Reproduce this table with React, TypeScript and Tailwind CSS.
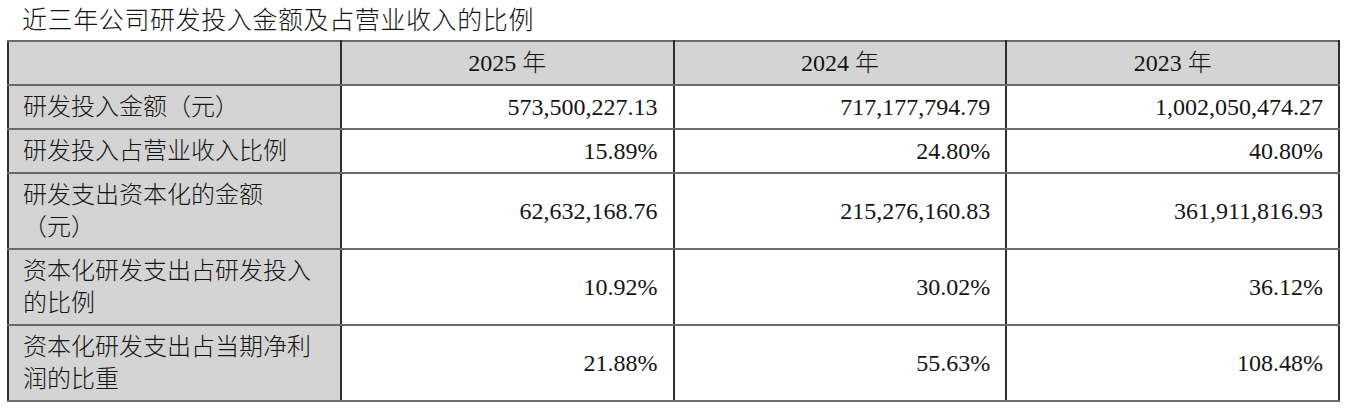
import React from "react";

const font = "font-['Liberation_Serif','Noto_Sans_CJK_SC',serif] font-light";

type Row = { label: React.ReactNode; vals: string[]; tall?: boolean };

const rows: Row[] = [
  { label: "研发投入金额（元）", vals: ["573,500,227.13", "717,177,794.79", "1,002,050,474.27"] },
  { label: "研发投入占营业收入比例", vals: ["15.89%", "24.80%", "40.80%"] },
  {
    label: (
      <>
        研发支出资本化的金额
        <br />
        （元）
      </>
    ),
    vals: ["62,632,168.76", "215,276,160.83", "361,911,816.93"],
    tall: true,
  },
  {
    label: (
      <>
        资本化研发支出占研发投入
        <br />
        的比例
      </>
    ),
    vals: ["10.92%", "30.02%", "36.12%"],
    tall: true,
  },
  {
    label: (
      <>
        资本化研发支出占当期净利
        <br />
        润的比重
      </>
    ),
    vals: ["21.88%", "55.63%", "108.48%"],
    tall: true,
  },
];

const cellBorder =
  "border-x-2 border-x-[#2e2e2e] border-y-2 border-y-[#6a6a6a]";

export default function App() {
  return (
    <div className={`w-[1348px] h-[412px] bg-white text-[#141414] ${font}`}>
      <div className="h-[40px] pl-[22px] pt-[4px] text-[25px] leading-[34px] tracking-[0.6px] whitespace-nowrap">
        近三年公司研发投入金额及占营业收入的比例
      </div>
      <table className="ml-[7px] w-[1333px] table-fixed border-collapse">
        <tbody>
          <tr className="h-[44px] bg-[#d4d4d4]">
            <td className={cellBorder}></td>
            {["2025 年", "2024 年", "2023 年"].map((y) => (
              <td key={y} className={`${cellBorder} text-center text-[24px] leading-[30px]`}>
                {y}
              </td>
            ))}
          </tr>
          {rows.map((r, i) => (
            <tr key={i} className={r.tall ? "h-[76px]" : "h-[44px]"}>
              <td
                className={`${cellBorder} bg-[#d4d4d4] pl-[14px] text-left text-[24px] leading-[32px] whitespace-nowrap`}
              >
                {r.label}
              </td>
              {r.vals.map((v, j) => (
                <td
                  key={j}
                  className={`${cellBorder} bg-white pr-[15px] text-right text-[24px] leading-[30px]`}
                >
                  {v}
                </td>
              ))}
            </tr>
          ))}
        </tbody>
      </table>
    </div>
  );
}
